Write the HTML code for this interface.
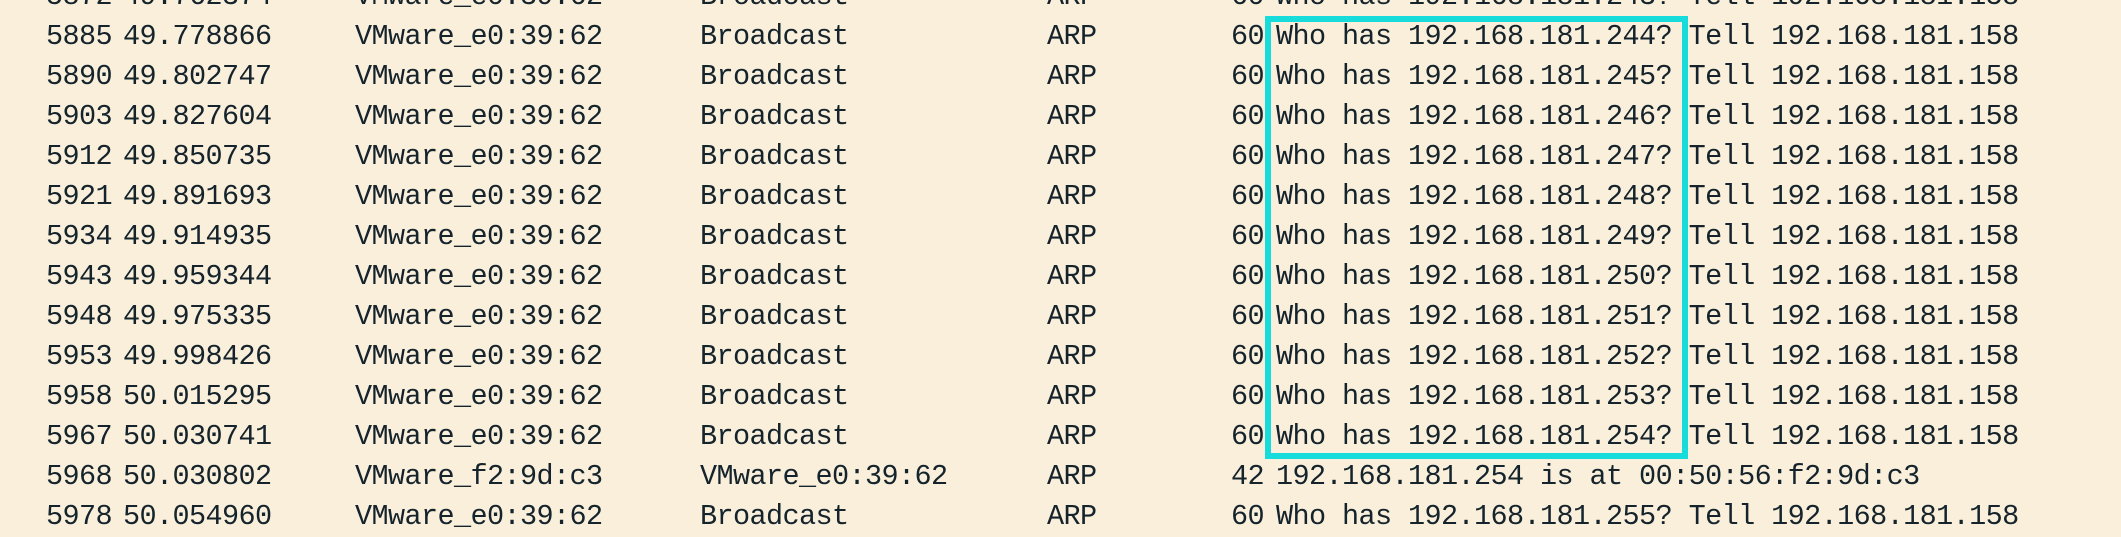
<!DOCTYPE html>
<html><head><meta charset="utf-8"><style>
html,body{margin:0;padding:0}
body{width:2121px;height:535px;background:#faefda;overflow:hidden;position:relative;font-family:"Liberation Mono",monospace;font-size:28.5px;color:#14232c;letter-spacing:-0.6px}
.r{position:absolute;left:0;width:2121px;height:40px;line-height:40px;white-space:pre}
.r span{position:absolute;top:0}
.n{right:2009px;text-align:right}
.t{left:123px}.s{left:355px}.d{left:700px}.p{left:1047px}
.l{right:857px;text-align:right}.i{left:1276px}
.box{position:absolute;left:1265px;top:16px;width:411px;height:431px;border:6px solid #18dcdc}
</style></head><body>
<div class="r" style="top:-23px"><span class="n">5872</span><span class="t">49.762374</span><span class="s">VMware_e0:39:62</span><span class="d">Broadcast</span><span class="p">ARP</span><span class="l">60</span><span class="i">Who has 192.168.181.243? Tell 192.168.181.158</span></div>
<div class="r" style="top:17px"><span class="n">5885</span><span class="t">49.778866</span><span class="s">VMware_e0:39:62</span><span class="d">Broadcast</span><span class="p">ARP</span><span class="l">60</span><span class="i">Who has 192.168.181.244? Tell 192.168.181.158</span></div>
<div class="r" style="top:57px"><span class="n">5890</span><span class="t">49.802747</span><span class="s">VMware_e0:39:62</span><span class="d">Broadcast</span><span class="p">ARP</span><span class="l">60</span><span class="i">Who has 192.168.181.245? Tell 192.168.181.158</span></div>
<div class="r" style="top:97px"><span class="n">5903</span><span class="t">49.827604</span><span class="s">VMware_e0:39:62</span><span class="d">Broadcast</span><span class="p">ARP</span><span class="l">60</span><span class="i">Who has 192.168.181.246? Tell 192.168.181.158</span></div>
<div class="r" style="top:137px"><span class="n">5912</span><span class="t">49.850735</span><span class="s">VMware_e0:39:62</span><span class="d">Broadcast</span><span class="p">ARP</span><span class="l">60</span><span class="i">Who has 192.168.181.247? Tell 192.168.181.158</span></div>
<div class="r" style="top:177px"><span class="n">5921</span><span class="t">49.891693</span><span class="s">VMware_e0:39:62</span><span class="d">Broadcast</span><span class="p">ARP</span><span class="l">60</span><span class="i">Who has 192.168.181.248? Tell 192.168.181.158</span></div>
<div class="r" style="top:217px"><span class="n">5934</span><span class="t">49.914935</span><span class="s">VMware_e0:39:62</span><span class="d">Broadcast</span><span class="p">ARP</span><span class="l">60</span><span class="i">Who has 192.168.181.249? Tell 192.168.181.158</span></div>
<div class="r" style="top:257px"><span class="n">5943</span><span class="t">49.959344</span><span class="s">VMware_e0:39:62</span><span class="d">Broadcast</span><span class="p">ARP</span><span class="l">60</span><span class="i">Who has 192.168.181.250? Tell 192.168.181.158</span></div>
<div class="r" style="top:297px"><span class="n">5948</span><span class="t">49.975335</span><span class="s">VMware_e0:39:62</span><span class="d">Broadcast</span><span class="p">ARP</span><span class="l">60</span><span class="i">Who has 192.168.181.251? Tell 192.168.181.158</span></div>
<div class="r" style="top:337px"><span class="n">5953</span><span class="t">49.998426</span><span class="s">VMware_e0:39:62</span><span class="d">Broadcast</span><span class="p">ARP</span><span class="l">60</span><span class="i">Who has 192.168.181.252? Tell 192.168.181.158</span></div>
<div class="r" style="top:377px"><span class="n">5958</span><span class="t">50.015295</span><span class="s">VMware_e0:39:62</span><span class="d">Broadcast</span><span class="p">ARP</span><span class="l">60</span><span class="i">Who has 192.168.181.253? Tell 192.168.181.158</span></div>
<div class="r" style="top:417px"><span class="n">5967</span><span class="t">50.030741</span><span class="s">VMware_e0:39:62</span><span class="d">Broadcast</span><span class="p">ARP</span><span class="l">60</span><span class="i">Who has 192.168.181.254? Tell 192.168.181.158</span></div>
<div class="r" style="top:457px"><span class="n">5968</span><span class="t">50.030802</span><span class="s">VMware_f2:9d:c3</span><span class="d">VMware_e0:39:62</span><span class="p">ARP</span><span class="l">42</span><span class="i">192.168.181.254 is at 00:50:56:f2:9d:c3</span></div>
<div class="r" style="top:497px"><span class="n">5978</span><span class="t">50.054960</span><span class="s">VMware_e0:39:62</span><span class="d">Broadcast</span><span class="p">ARP</span><span class="l">60</span><span class="i">Who has 192.168.181.255? Tell 192.168.181.158</span></div>
<div class="box"></div>
</body></html>
